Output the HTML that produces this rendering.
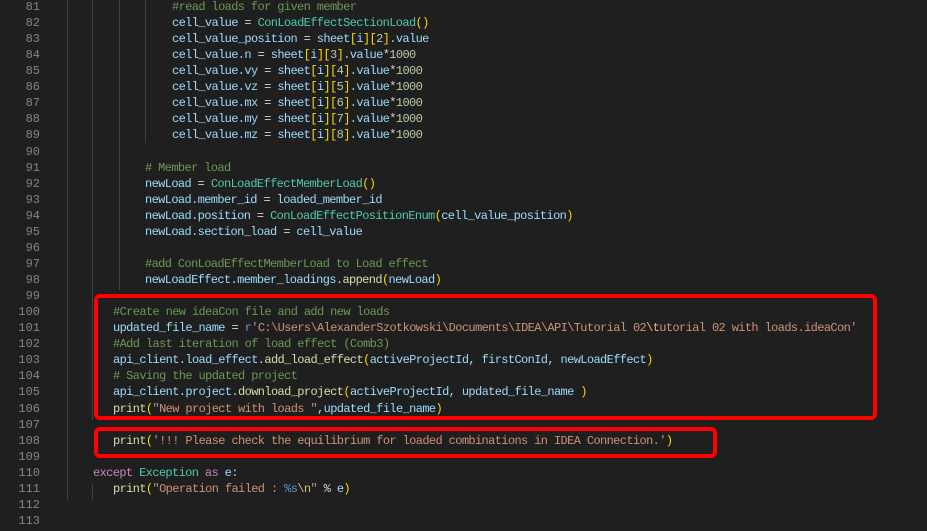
<!DOCTYPE html>
<html><head><meta charset="utf-8"><style>
body{margin:0;background:#1f1f1f;width:927px;height:531px;overflow:hidden;position:relative;font-family:"Liberation Mono","DejaVu Sans Mono",monospace;font-size:12px;letter-spacing:-0.62px;}
.ln{position:absolute;left:0;width:40px;text-align:right;color:#858585;letter-spacing:0}
.c{position:absolute;white-space:pre;color:#9cdcfe}
.g{position:absolute;top:0;width:1px;background:#404040}
.cm{color:#6a9955}.cl{color:#4ec9b0}.f{color:#dcdcaa}.s{color:#ce9178}.b{color:#ffd700}.p{color:#da70d6}.n{color:#b5cea8}.k{color:#c586c0}.o{color:#d4d4d4}.bl{color:#569cd6}.e{color:#d7ba7d}
.box{position:absolute;border:4px solid #ff0000;border-radius:6px;box-sizing:border-box}
</style></head><body>
<div class="g" style="left:67px;height:420px"></div>
<div class="g" style="left:67px;top:420px;height:80px"></div>
<div class="g" style="left:92px;height:420px"></div>
<div class="g" style="left:92px;top:484px;height:16px"></div>
<div class="g" style="left:119px;height:290px"></div>
<div class="g" style="left:145px;height:143px"></div>
<div id="L"></div>
<script>
var lines=[
[172,'<span class="cm">#read loads for given member</span>'],
[172,'cell_value <span class="o">=</span> <span class="cl">ConLoadEffectSectionLoad</span><span class="b">()</span>'],
[172,'cell_value_position <span class="o">=</span> sheet<span class="b">[</span>i<span class="b">][</span><span class="n">2</span><span class="b">]</span>.value'],
[172,'cell_value.n <span class="o">=</span> sheet<span class="b">[</span>i<span class="b">][</span><span class="n">3</span><span class="b">]</span>.value<span class="o">*</span><span class="n">1000</span>'],
[172,'cell_value.vy <span class="o">=</span> sheet<span class="b">[</span>i<span class="b">][</span><span class="n">4</span><span class="b">]</span>.value<span class="o">*</span><span class="n">1000</span>'],
[172,'cell_value.vz <span class="o">=</span> sheet<span class="b">[</span>i<span class="b">][</span><span class="n">5</span><span class="b">]</span>.value<span class="o">*</span><span class="n">1000</span>'],
[172,'cell_value.mx <span class="o">=</span> sheet<span class="b">[</span>i<span class="b">][</span><span class="n">6</span><span class="b">]</span>.value<span class="o">*</span><span class="n">1000</span>'],
[172,'cell_value.my <span class="o">=</span> sheet<span class="b">[</span>i<span class="b">][</span><span class="n">7</span><span class="b">]</span>.value<span class="o">*</span><span class="n">1000</span>'],
[172,'cell_value.mz <span class="o">=</span> sheet<span class="b">[</span>i<span class="b">][</span><span class="n">8</span><span class="b">]</span>.value<span class="o">*</span><span class="n">1000</span>'],
[0,''],
[145,'<span class="cm"># Member load</span>'],
[145,'newLoad <span class="o">=</span> <span class="cl">ConLoadEffectMemberLoad</span><span class="b">()</span>'],
[145,'newLoad.member_id <span class="o">=</span> loaded_member_id'],
[145,'newLoad.position <span class="o">=</span> <span class="cl">ConLoadEffectPositionEnum</span><span class="b">(</span>cell_value_position<span class="b">)</span>'],
[145,'newLoad.section_load <span class="o">=</span> cell_value'],
[0,''],
[145,'<span class="cm">#add ConLoadEffectMemberLoad to Load effect</span>'],
[145,'newLoadEffect.member_loadings.<span class="f">append</span><span class="b">(</span>newLoad<span class="b">)</span>'],
[0,''],
[113,'<span class="cm">#Create new ideaCon file and add new loads</span>'],
[113,'updated_file_name <span class="o">=</span> <span class="bl">r</span><span class="s">\'C:\\Users\\AlexanderSzotkowski\\Documents\\IDEA\\API\\Tutorial 02</span><span class="e">\\t</span><span class="s">utorial 02 with loads.ideaCon\'</span>'],
[113,'<span class="cm">#Add last iteration of load effect (Comb3)</span>'],
[113,'api_client.load_effect.<span class="f">add_load_effect</span><span class="b">(</span>activeProjectId, firstConId, newLoadEffect<span class="b">)</span>'],
[113,'<span class="cm"># Saving the updated project</span>'],
[113,'api_client.project.<span class="f">download_project</span><span class="b">(</span>activeProjectId, updated_file_name <span class="b">)</span>'],
[113,'<span class="f">print</span><span class="b">(</span><span class="s">"New project with loads "</span>,updated_file_name<span class="b">)</span>'],
[0,''],
[113,'<span class="f">print</span><span class="b">(</span><span class="s">\'!!! Please check the equilibrium for loaded combinations in IDEA Connection.\'</span><span class="b">)</span>'],
[0,''],
[93,'<span class="k">except</span> <span class="cl">Exception</span> <span class="k">as</span> e:'],
[113,'<span class="f">print</span><span class="b">(</span><span class="s">"Operation failed : </span><span class="bl">%s</span><span class="e">\\n</span><span class="s">"</span> <span class="o">%</span> e<span class="b">)</span>'],
[0,''],[0,'']
];
var h='';
for(var i=0;i<lines.length;i++){var y=(-1+i*16.06).toFixed(2);
h+='<div class="ln" style="top:'+y+'px;line-height:16px">'+(81+i)+'</div>';
if(lines[i][1])h+='<div class="c" style="left:'+lines[i][0]+'px;top:'+y+'px;line-height:16px">'+lines[i][1]+'</div>';}
document.getElementById('L').innerHTML=h;
</script>
<div class="box" style="left:94px;top:294px;width:783px;height:126px"></div>
<div class="box" style="left:94px;top:427px;width:623px;height:31px"></div>
</body></html>
